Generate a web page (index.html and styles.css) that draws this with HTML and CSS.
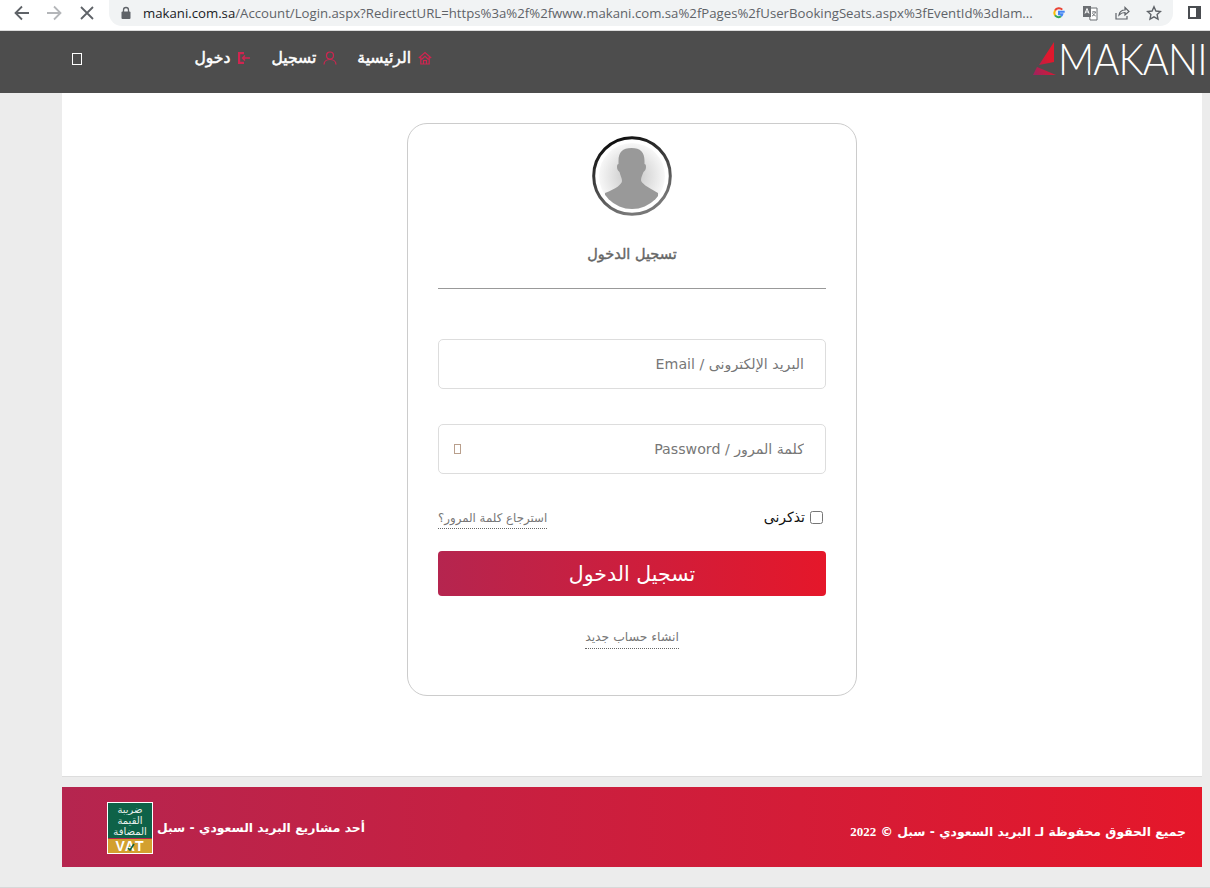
FILE: index.html
```html
<!DOCTYPE html>
<html lang="ar">
<head>
    <meta charset="UTF-8">
    <title>Makani</title>
    <link rel="stylesheet" href="styles.css">
</head>
<body>
    <div class="browser-bar">
        <svg class="tool-icon back" width="18" height="18" viewBox="0 0 18 18"><path d="M16 9H3M9 2.5 2.5 9 9 15.5" fill="none" stroke="#5f6368" stroke-width="1.8"/></svg>
        <svg class="tool-icon forward" width="18" height="18" viewBox="0 0 18 18"><path d="M2 9h13M9 2.500 15.500 9 9 15.500" fill="none" stroke="#b4b6b9" stroke-width="1.800"/></svg>
        <svg class="tool-icon stop" width="16" height="16" viewBox="0 0 16 16"><path d="M2 2l12 12M14 2 2 14" fill="none" stroke="#5f6368" stroke-width="1.800"/></svg>
        <div class="url-pill">
            <svg class="lock" width="12" height="14" viewBox="0 0 12 14"><path d="M3.500 6V4a2.500 2.500 0 0 1 5 0v2" fill="none" stroke="#5f6368" stroke-width="1.300"/><rect x="1.500" y="5.500" width="9" height="7.500" rx="1" fill="#5f6368"/></svg>
            <div class="url"><span class="url-host">makani.com.sa</span>/Account/Login.aspx?RedirectURL=https%3a%2f%2fwww.makani.com.sa%2fPages%2fUserBookingSeats.aspx%3fEventId%3dIam...</div>
            <svg class="pill-icon" width="14" height="14" viewBox="0 0 14 14">
                <path d="M12.700 5.800H7v2.500h3.300a3.500 3.500 0 0 1-1.400 2" fill="none" stroke="#4285f4" stroke-width="2"/>
                <path d="M3 4.600A4.700 4.700 0 0 1 10.300 3.600" fill="none" stroke="#ea4335" stroke-width="2"/>
                <path d="M3 4.600a4.700 4.700 0 0 0 0 4.800" fill="none" stroke="#fbbc05" stroke-width="2"/>
                <path d="M3 9.400a4.700 4.700 0 0 0 5.900 1" fill="none" stroke="#34a853" stroke-width="2"/>
            </svg>
            <svg class="pill-icon" width="16" height="16" viewBox="0 0 16 16">
                <path d="M7 3h8v12H8z" fill="#fff" stroke="#6b6e72"/>
                <rect x="1" y="1" width="8" height="11" fill="#6b6e72"/>
                <path d="M3 8.500 5 3.500 7 8.500M3.800 7h2.400" fill="none" stroke="#fff"/>
                <path d="M10 7h4M12 6v1M13.500 7c-.5 2-1.800 3.500-3.500 4M10.500 8c.5 1.300 1.800 2.500 3.300 3" fill="none" stroke="#6b6e72" stroke-width=".9"/>
            </svg>
            <svg class="pill-icon" width="16" height="16" viewBox="0 0 16 16"><path d="M2 8v6h11v-3M5 10c.5-3 3-5 6-5V2.500L15 6.500l-4 3.500V7.500c-2.500 0-4.500 1-6 2.500z" fill="none" stroke="#5f6368" stroke-width="1.200"/></svg>
            <svg class="pill-icon" width="16" height="16" viewBox="0 0 16 16"><path d="M8 1.800 9.900 6l4.600.5-3.400 3.100.9 4.500L8 11.800l-4 2.300.9-4.500L1.500 6.500 6.100 6z" fill="none" stroke="#5f6368" stroke-width="1.400"/></svg>
        </div>
        <div class="panel-icon"></div>
    </div>

    <header class="site-header">
        <div class="logo">
            <svg class="logo-mark" width="24" height="33" viewBox="0 0 24 33">
                <defs>
                    <linearGradient id="sail" x1="0" y1="1" x2="1" y2="0">
                        <stop offset="0" stop-color="#9b2460"/>
                        <stop offset="0.6" stop-color="#e0182d"/>
                    </linearGradient>
                </defs>
                <path d="M21 0V20L6 23zM4 25 23 33H0z" fill="url(#sail)"/>
            </svg>
            <span class="logo-text">MAKANI</span>
        </div>
        <nav class="main-nav">
            <a class="nav-link" href="#">
                <svg width="14" height="14" viewBox="0 0 14 14"><path d="M.8 7 7 1.500 13.200 7M2.800 6v7h8.400V6M5.500 13V9.500h3V13M3.500 8.500 7 5.300l3.500 3.200" fill="none" stroke="#d02550" stroke-width="1.200"/></svg>
                الرئيسية
            </a>
            <a class="nav-link" href="#">
                <svg width="14" height="14" viewBox="0 0 14 14"><circle cx="7" cy="4.500" r="3.500" fill="none" stroke="#d02550" stroke-width="1.200"/><path d="M1 13.500c0-3 2.500-5 6-5s6 2 6 5" fill="none" stroke="#d02550" stroke-width="1.200"/></svg>
                تسجيل
            </a>
            <a class="nav-link" href="#">
                <svg width="14" height="14" viewBox="0 0 14 14"><path d="M7 2.100H2.100v9.800H7" fill="none" stroke="#d02550" stroke-width="2.200"/><path d="M13 7H5.500M8 4.500 5.500 7 8 9.500" fill="none" stroke="#d02550" stroke-width="1.500"/></svg>
                دخول
            </a>
        </nav>
        <span class="menu-toggle"></span>
    </header>

    <main class="page">
        <div class="login-card">
            <svg class="avatar" width="80" height="80" viewBox="0 0 80 80">
                <defs>
                    <radialGradient id="face">
                        <stop offset="0.3" stop-color="#d2d2d2"/>
                        <stop offset="1" stop-color="#f7f7f7"/>
                    </radialGradient>
                    <linearGradient id="ring" x1="0" y1="0" x2="0.4" y2="1">
                        <stop offset="0" stop-color="#000"/>
                        <stop offset="1" stop-color="#777"/>
                    </linearGradient>
                    <clipPath id="faceClip"><circle cx="40" cy="40" r="33"/></clipPath>
                </defs>
                <circle cx="40" cy="40" r="38.300" fill="#fff" stroke="url(#ring)" stroke-width="3"/>
                <circle cx="40" cy="40" r="33" fill="url(#face)"/>
                <path clip-path="url(#faceClip)" d="M26.500 25c0-9 4-13 13-13s13 4 13 13v3c1 0 1.500 1 1.500 3s-1 4-2.500 5c-1 3-2.500 5-2.500 8 0 3 6 7 17 13v20H13V57c11-4 17-9 17-12 0-3-1.500-5-2.500-9-1.500-1-2.500-3-2.500-5s.5-3 1.500-3z" fill="#999"/>
            </svg>
            <h1 class="card-title">تسجيل الدخول</h1>
            <hr class="card-rule">
            <input class="field" type="text" placeholder="البريد الإلكترونى / Email">
            <div class="password-wrap">
                <input class="field" type="password" placeholder="كلمة المرور / Password">
                <span class="eye-icon"></span>
            </div>
            <div class="options-row">
                <label class="remember"><input type="checkbox">تذكرنى</label>
                <a class="dotted-link" href="#">استرجاع كلمة المرور؟</a>
            </div>
            <button class="login-btn" type="button">تسجيل الدخول</button>
            <div class="signup-row"><a class="dotted-link" href="#">انشاء حساب جديد</a></div>
        </div>
    </main>

    <footer class="site-footer">
        <div class="footer-copy">جميع الحقوق محفوظة لـ البريد السعودي - سبل © <span class="year">2022</span></div>
        <div class="footer-project">
            <span>أحد مشاريع البريد السعودي - سبل</span>
            <div class="vat-badge">
                <div class="vat-ar">ضريبة<br>القيمة<br>المضافة</div>
                <div class="vat-en">VAT
                    <svg class="vat-check" width="10" height="10" viewBox="0 0 10 10"><path d="M2 6l2 2 4-6" fill="none" stroke="#0e6248" stroke-width="1.600"/></svg>
                </div>
            </div>
        </div>
    </footer>
</body>
</html>
```

FILE: styles.css
```css
* {
    box-sizing: border-box;
}

body {
    margin: 0;
    height: 888px;
    overflow: hidden;
    background-color: #ececec;
    font-family: "DejaVu Sans", sans-serif;
    border-bottom: 1px solid #d8d8d8;
}

a {
    text-decoration: none;
}

/* browser toolbar */
.browser-bar {
    height: 31px;
    display: flex;
    background-color: #fff;
    border-bottom: 1px solid #dcdcdc;
}

.tool-icon {
    flex: none;
    margin-top: 4px;
}

.back {
    margin-left: 13px;
}

.forward {
    margin-left: 14px;
}

.stop {
    margin-left: 16px;
    margin-top: 5px;
}

.url-pill {
    width: 1064px;
    height: 26px;
    margin-left: 14px;
    padding-left: 11px;
    display: flex;
    align-items: center;
    background-color: #f1f3f4;
    border-radius: 0 0 13px 13px;
}

.lock {
    flex: none;
    margin-right: 11px;
}

.url {
    width: 909px;
    flex: none;
    font-family: "Open Sans", sans-serif;
    font-size: 13.200px;
    color: #5f6368;
    white-space: nowrap;
}

.url-host {
    color: #202124;
}

.pill-icon {
    flex: none;
    margin-right: 16px;
}

.panel-icon {
    width: 13px;
    height: 13px;
    margin: 6px 0 0 15px;
    border: 2px solid #4a4d51;
    border-right-width: 5px;
}

/* site header */
.site-header {
    direction: rtl;
    height: 62px;
    display: flex;
    align-items: center;
    padding: 0 7px 0 0;
    background-color: #4d4d4d;
}

.logo {
    direction: ltr;
    width: 170px;
    display: flex;
    flex-direction: row;
    align-items: flex-end;
    height: 33px;
    margin-top: -8px;
}

.logo-mark {
    flex: none;
    margin-right: 1px;
}

.logo-text {
    font-family: "Lato", sans-serif;
    font-weight: 300;
    font-size: 44px;
    line-height: 33px;
    letter-spacing: -1px;
    color: #fff;
    transform: scaleX(0.905);
    transform-origin: left;
}

.main-nav {
    display: flex;
    gap: 20px;
    margin: -8px 601px 0 0;
}

.nav-link {
    display: flex;
    align-items: center;
    gap: 7px;
    font-size: 15.600px;
    -webkit-text-stroke: 0.5px #fff;
    color: #fff;
}

.menu-toggle {
    width: 10px;
    height: 12px;
    margin: -6px 112px 0 0;
    border: 1px solid #fff;
}

/* login */
.page {
    width: 1140px;
    height: 684px;
    margin-left: 62px;
    padding-top: 30px;
    background-color: #fff;
    border-bottom: 1px solid #ddd;
    direction: rtl;
}

.login-card {
    width: 450px;
    height: 573px;
    margin: 0 auto;
    padding: 12px 30px 0;
    border: 1px solid #ccc;
    border-radius: 20px;
}

.avatar {
    display: block;
    margin: 0 auto;
}

.card-title {
    margin: 29px 0 0;
    font-size: 14.500px;
    line-height: 18px;
    font-weight: normal;
    -webkit-text-stroke: 0.4px #666;
    text-align: center;
    color: #666;
}

.card-rule {
    margin: 25px 0 50px;
    border: 0;
    border-top: 1px solid #999;
}

.field {
    display: block;
    width: 100%;
    height: 50px;
    padding: 0 21px;
    border: 1px solid #ddd;
    border-radius: 5px;
    font-family: "DejaVu Sans", sans-serif;
    font-size: 14.200px;
    direction: rtl;
    background-color: #fff;
}

.field::placeholder {
    color: #777;
    opacity: 1;
}

.password-wrap {
    position: relative;
    margin-top: 35px;
}

.eye-icon {
    position: absolute;
    left: 16px;
    top: 20px;
    width: 7px;
    height: 10px;
    border: 1px solid #b99f8c;
}

.options-row {
    display: flex;
    justify-content: space-between;
    align-items: center;
    height: 28px;
    margin-top: 29px;
    padding-right: 3px;
}

.options-row .dotted-link {
    margin-top: 6px;
}

.remember {
    display: flex;
    align-items: center;
    gap: 2px;
    font-size: 14px;
    color: #111;
}

.remember input {
    margin: 0 0 0 3px;
    width: 13px;
    height: 13px;
}

.dotted-link {
    display: inline-block;
    font-size: 11.800px;
    line-height: 15px;
    padding-bottom: 2px;
    color: #777;
    border-bottom: 1px dotted #666;
}

.login-btn {
    display: block;
    width: 100%;
    height: 45px;
    margin-top: 20px;
    border: 0;
    border-radius: 4px;
    background: linear-gradient(to left, #e5172a, #b5254f);
    font-family: "DejaVu Sans", sans-serif;
    font-size: 20.500px;
    color: #fff;
}

.signup-row {
    margin-top: 30px;
    text-align: center;
}

.signup-row .dotted-link {
    font-size: 12.400px;
    padding-bottom: 4px;
}

/* footer */
.site-footer {
    direction: rtl;
    width: 1140px;
    height: 80px;
    margin: 10px 0 0 62px;
    padding: 0 16px 0 45px;
    display: flex;
    justify-content: space-between;
    align-items: center;
    background: linear-gradient(to left, #e5172a, #b5254f);
    color: #fff;
    font-size: 12.400px;
    font-weight: bold;
}

.footer-copy {
    margin-top: 9px;
}

.year {
    font-family: "Liberation Serif", serif;
    font-size: 13px;
}

.footer-project {
    display: flex;
    align-items: center;
    gap: 4px;
}

.vat-badge {
    width: 46px;
    height: 52px;
    margin-top: 2px;
    border: 1px solid #fff;
    font-weight: normal;
    text-align: center;
}

.vat-ar {
    height: 35px;
    padding-top: 1px;
    background-color: #0e6248;
    font-size: 10px;
    line-height: 11px;
    color: #e8f0ec;
    overflow: hidden;
}

.vat-en {
    position: relative;
    height: 14px;
    margin-top: 1px;
    direction: ltr;
    background-color: #d3a02f;
    font-family: "Liberation Sans", sans-serif;
    font-weight: bold;
    font-size: 14px;
    line-height: 14px;
    letter-spacing: 1px;
}

.vat-check {
    position: absolute;
    left: 18px;
    top: 3px;
}
```
